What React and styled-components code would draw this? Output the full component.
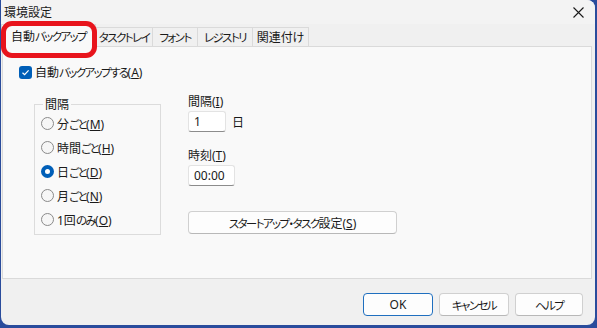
import React from 'react'
import styled, { createGlobalStyle } from 'styled-components'

const GlobalStyle = createGlobalStyle`
body {
  margin: 0;
  background: #2a4c9c;
  font-family: "Noto Sans", "Noto Sans CJK JP", sans-serif;
  font-size: 12px;
  color: #1a1a1a;
  font-feature-settings: "palt";
}
`

// katakana / hiragana in the original UI font are much narrower than Noto CJK
const Kana = styled.span`
font-size: 11.5px;
letter-spacing: -1.6px;
`

const Window = styled.div`
position: relative;
width: 594px;
height: 325px;
margin-left: 1px;
background: #f0f0f0;
border-radius: 0 8px 8px 8px;
overflow: hidden;
display: flex;
flex-direction: column;
`

const TitleBar = styled.div`
height: 24px;
display: flex;
align-items: center;
justify-content: space-between;
padding: 0 11px 0 3px;
background: #f3f3f3;
`

const TabStrip = styled.div`
display: flex;
align-items: flex-end;
height: 23px;
padding-left: 1px;
`

const Tab = styled.div`
width: ${p => p.w}px;
height: ${p => (p.active ? '23px' : '20px')};
box-sizing: border-box;
display: flex;
align-items: center;
justify-content: center;
white-space: nowrap;
background: ${p => (p.active ? '#f9f9f9' : '#f0f0f0')};
border: 1px solid #dadada;
border-bottom: ${p => (p.active ? 'none' : '1px solid #dadada')};
margin-left: -1px;
position: relative;
z-index: ${p => (p.active ? 1 : 0)};
`

const Panel = styled.div`
height: 233px;
box-sizing: border-box;
margin: -1px 3px 0 1px;
background: #f9f9f9;
border: 1px solid #dadada;
padding: 16px 0 0 16px;
`

const CheckRow = styled.label`
display: flex;
align-items: center;
gap: 3px;
`

const CheckBox = styled.span`
width: 13px;
height: 13px;
border-radius: 3px;
background: #005fb8;
display: flex;
align-items: center;
justify-content: center;
`

const Columns = styled.div`
display: flex;
margin-top: 14px;
padding-left: 15px;
`

const Group = styled.fieldset`
width: 127px;
height: 140px;
box-sizing: border-box;
margin: 0;
padding: 1px 0 0 6px;
border: 1px solid #dcdcdc;
display: flex;
flex-direction: column;
gap: 5px;
& > legend {
  padding: 0 2px;
  margin-left: 2px;
}
`

const RadioRow = styled.label`
display: flex;
align-items: center;
gap: 3px;
height: 19px;
flex-shrink: 0;
`

const Radio = styled.span`
width: 13px;
height: 13px;
box-sizing: border-box;
border-radius: 50%;
border: ${p => (p.on ? '4px solid #005fb8' : '1px solid #8a8a8a')};
background: ${p => (p.on ? '#ffffff' : '#f6f6f6')};
`

const RightCol = styled.div`
margin-left: 27px;
margin-top: -1px;
display: flex;
flex-direction: column;
`

const FieldLabel = styled.div`
line-height: 16px;
`

const InputRow = styled.div`
display: flex;
align-items: center;
gap: 6px;
margin-top: 1px;
margin-bottom: ${p => p.gap}px;
`

const TextBox = styled.div`
width: ${p => p.w}px;
height: 21px;
box-sizing: border-box;
background: #ffffff;
border: 1px solid #e3e3e3;
border-bottom-color: #8c8c8c;
border-radius: 3px;
padding: 0 5px;
display: flex;
align-items: center;
`

const Button = styled.div`
width: ${p => p.w}px;
height: 23px;
box-sizing: border-box;
background: #fdfdfd;
border: 1px solid ${p => (p.primary ? '#1f6fbf' : '#d0d0d0')};
border-bottom-color: ${p => (p.primary ? '#1f6fbf' : '#b8b8b8')};
border-radius: 4px;
display: flex;
align-items: center;
justify-content: center;
white-space: nowrap;
`

const Footer = styled.div`
display: flex;
justify-content: flex-end;
gap: 6px;
padding: 14px 12px 0 0;
`

const Highlight = styled.div`
position: absolute;
z-index: 2;
left: 0;
top: 21px;
width: 96px;
height: 37px;
box-sizing: border-box;
border: 5px solid #e8141c;
border-radius: 11px;
`

export default function App() {
  return (
    <>
      <GlobalStyle />
      <Window>
        <TitleBar>
          <span>環境設定</span>
          <svg width="11" height="11" viewBox="0 0 11 11">
            <path d="M0.5 0.5 L10.5 10.5 M10.5 0.5 L0.5 10.5" stroke="#1a1a1a" strokeWidth="1.1" />
          </svg>
        </TitleBar>
        <TabStrip>
          <Tab active w={95}>自動<Kana>バックアップ</Kana></Tab>
          <Tab w={58}><Kana>タスクトレイ</Kana></Tab>
          <Tab w={46}><Kana>フォント</Kana></Tab>
          <Tab w={56}><Kana>レジストリ</Kana></Tab>
          <Tab w={57}>関連付け</Tab>
        </TabStrip>
        <Panel>
          <CheckRow>
            <CheckBox>
              <svg width="9" height="9" viewBox="0 0 9 9">
                <path d="M1.5 4.7 L3.6 6.7 L7.6 2.3" stroke="#fff" strokeWidth="1.2" fill="none" />
              </svg>
            </CheckBox>
            <span>自動<Kana>バックアップする</Kana>(<u>A</u>)</span>
          </CheckRow>
          <Columns>
            <Group>
              <legend>間隔</legend>
              <RadioRow><Radio /><span>分<Kana>ごと</Kana>(<u>M</u>)</span></RadioRow>
              <RadioRow><Radio /><span>時間<Kana>ごと</Kana>(<u>H</u>)</span></RadioRow>
              <RadioRow><Radio on /><span>日<Kana>ごと</Kana>(<u>D</u>)</span></RadioRow>
              <RadioRow><Radio /><span>月<Kana>ごと</Kana>(<u>N</u>)</span></RadioRow>
              <RadioRow><Radio /><span>1回<Kana>のみ</Kana>(<u>O</u>)</span></RadioRow>
            </Group>
            <RightCol>
              <FieldLabel>間隔(<u>I</u>)</FieldLabel>
              <InputRow gap={16}>
                <TextBox w={38}>1</TextBox>
                <span>日</span>
              </InputRow>
              <FieldLabel>時刻(<u>T</u>)</FieldLabel>
              <InputRow gap={25}>
                <TextBox w={47}>00:00</TextBox>
              </InputRow>
              <Button w={209}><span><Kana>スタートアップ・タスク</Kana>設定(<u>S</u>)</span></Button>
            </RightCol>
          </Columns>
        </Panel>
        <Footer>
          <Button w={70} primary>OK</Button>
          <Button w={70}><Kana>キャンセル</Kana></Button>
          <Button w={68}><Kana>ヘルプ</Kana></Button>
        </Footer>
        <Highlight />
      </Window>
    </>
  )
}
